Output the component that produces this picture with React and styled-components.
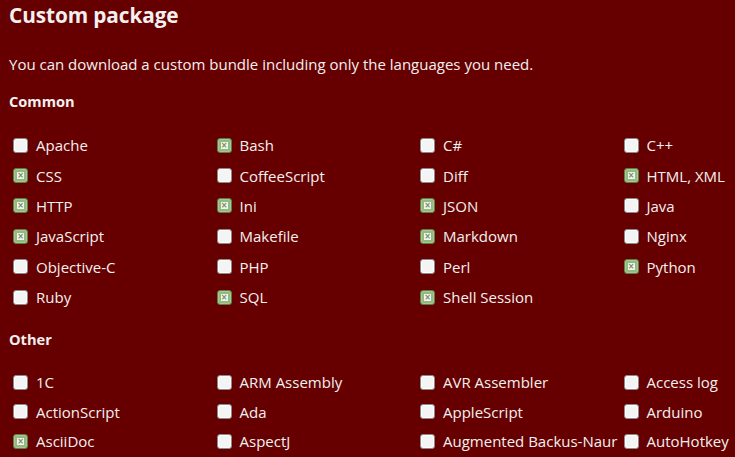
import React from "react";
import styled, { createGlobalStyle } from "styled-components";

const Global = createGlobalStyle`
  html, body { margin: 0; padding: 0; background: #660000; }
  body { font-family: "Open Sans", "Noto Sans", sans-serif; color: #f4f0f0; overflow: hidden; }
`;

const Page = styled.div`
  width: 735px;
  height: 457px;
  overflow: hidden;
  padding: 0 0 0 9px;
  box-sizing: border-box;
`;

const Title = styled.h2`
  margin: 0;
  padding-top: 1px;
  font-size: 20.8px;
  font-weight: 700;
  line-height: 28px;
  letter-spacing: -0.1px;
`;

const Intro = styled.p`
  margin: 25px 0 0;
  font-size: 15px;
  line-height: 20px;
`;

const Section = styled.h4`
  margin: ${(p) => p.$top}px 0 0;
  font-size: 14.6px;
  font-weight: 700;
  line-height: 20px;
`;

const Grid = styled.div`
  display: grid;
  grid-template-columns: repeat(4, 203.5px);
  grid-auto-rows: ${(p) => p.$row}px;
  margin-top: ${(p) => p.$top}px;
  padding-left: 4px;
`;

const Item = styled.label`
  display: flex;
  align-items: center;
  gap: 8px;
  font-size: 15px;
  white-space: nowrap;
`;

const Box = styled.span`
  box-sizing: border-box;
  width: 15px;
  height: 15px;
  border-radius: 3px;
  flex: none;
  border: 1px solid ${(p) => (p.$on ? "#5f7d4c" : "#8a8a8a")};
  background: ${(p) => (p.$on ? "#93b97c" : "#f4f4f4")};
  box-shadow: inset 0 0 0 1px ${(p) => (p.$on ? "#a8c892" : "#ffffff")};
  display: flex;
  align-items: center;
  justify-content: center;
`;

const Mark = styled.span`
  width: 7px;
  height: 7px;
  background: #f2f2f2;
  display: flex;
  align-items: center;
  justify-content: center;
  color: #6f8f5a;
  font-size: 8px;
  line-height: 7px;
  font-weight: 700;
  font-family: "DejaVu Sans", sans-serif;
`;

const common = [
  ["Apache", 0], ["Bash", 1], ["C#", 0], ["C++", 0],
  ["CSS", 1], ["CoffeeScript", 0], ["Diff", 0], ["HTML, XML", 1],
  ["HTTP", 1], ["Ini", 1], ["JSON", 1], ["Java", 0],
  ["JavaScript", 1], ["Makefile", 0], ["Markdown", 1], ["Nginx", 0],
  ["Objective-C", 0], ["PHP", 0], ["Perl", 0], ["Python", 1],
  ["Ruby", 0], ["SQL", 1], ["Shell Session", 1],
];

const other = [
  ["1C", 0], ["ARM Assembly", 0], ["AVR Assembler", 0], ["Access log", 0],
  ["ActionScript", 0], ["Ada", 0], ["AppleScript", 0], ["Arduino", 0],
  ["AsciiDoc", 1], ["AspectJ", 0], ["Augmented Backus-Naur", 0], ["AutoHotkey", 0],
];

function Check({ on }) {
  return (
    <Box $on={on}>
      {on ? <Mark>×</Mark> : null}
    </Box>
  );
}

function List({ items, row, top }) {
  return (
    <Grid $row={row} $top={top}>
      {items.map(([name, on]) => (
        <Item key={name}>
          <Check on={!!on} />
          {name}
        </Item>
      ))}
    </Grid>
  );
}

export default function App() {
  return (
    <Page>
      <Global />
      <Title>Custom package</Title>
      <Intro>You can download a custom bundle including only the languages you need.</Intro>
      <Section $top={17}>Common</Section>
      <List items={common} row={30.4} top={19} />
      <Section $top={17}>Other</Section>
      <List items={other} row={29.6} top={18} />
    </Page>
  );
}
